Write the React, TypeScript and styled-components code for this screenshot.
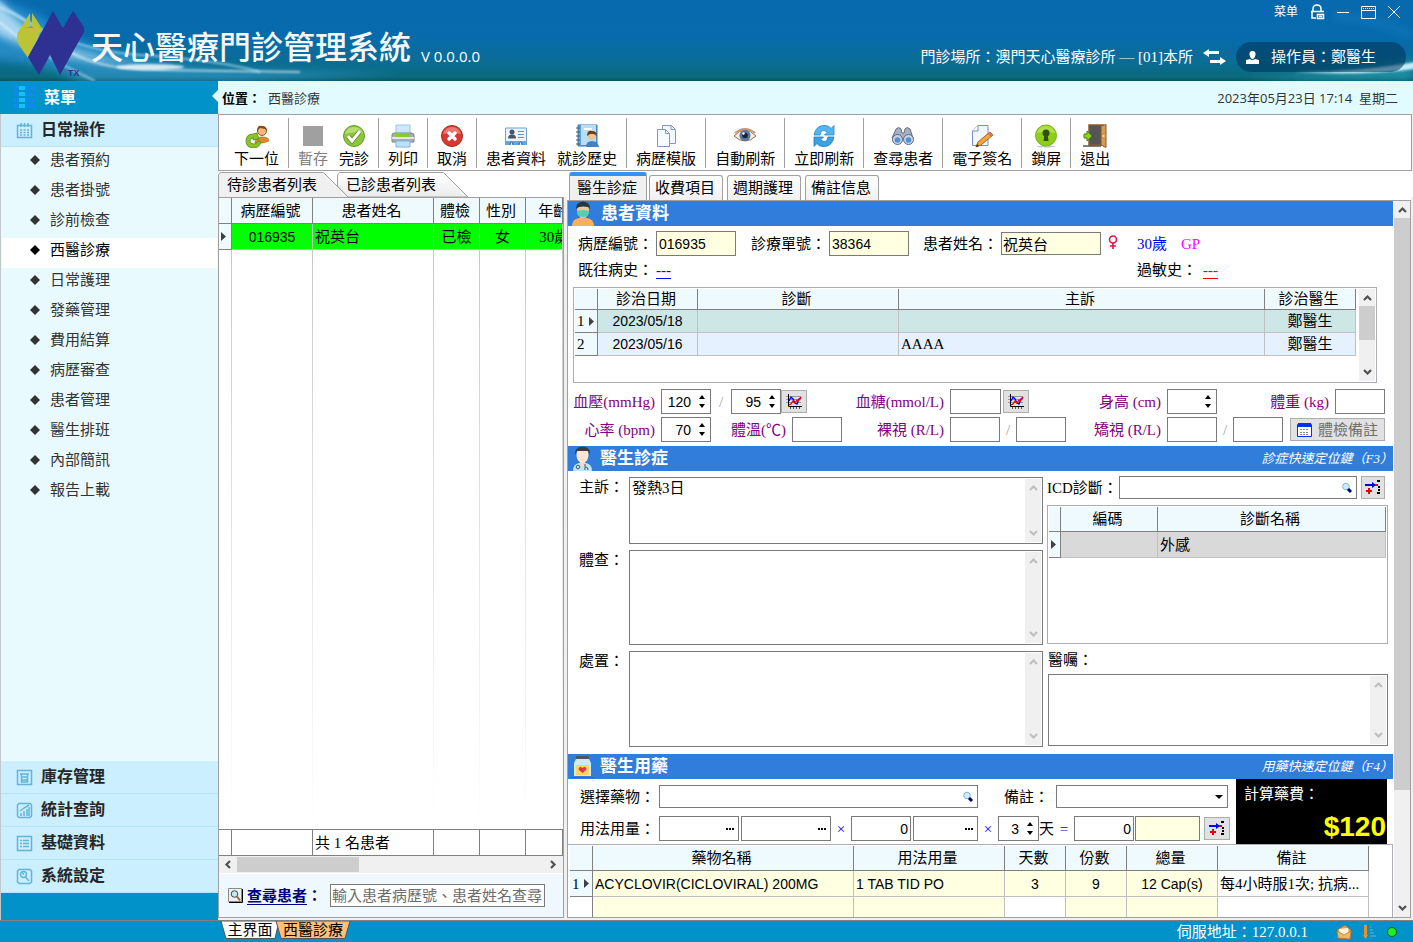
import React from 'react';
import styled, { createGlobalStyle, css } from 'styled-components';

const SERIF = '"Liberation Serif", "Noto Sans CJK TC", serif';
const SANS = '"Liberation Sans", "Noto Sans CJK TC", sans-serif';
const UI = '"Open Sans", "Noto Sans CJK TC", sans-serif';

const Global = createGlobalStyle`
  *, *::before, *::after { box-sizing: border-box; }
  body { margin: 0; background: #f0f0f0; font: 15px/20px ${SERIF}; color: #000; }
  button, input, select, textarea { font: inherit; color: inherit; margin: 0; padding: 0; border: 0; border-radius: 0; background: none; }
  input:focus, textarea:focus, select:focus { outline: 0; }
  ul { list-style: none; margin: 0; padding: 0; }
  svg { display: block; flex: none; }
`;

const Shell = styled.div`
  height: 100vh;
  min-width: 1320px;
  display: flex;
  flex-direction: column;
  overflow: hidden;
  white-space: nowrap;
`;

/* ---------- title bar ---------- */
const Header = styled.header`
  position: relative;
  flex: none;
  height: 81px;
  display: flex;
  justify-content: space-between;
  color: #fff;
  background: linear-gradient(#0769ae 0, #066bad 45%, #0a6d96 75%, #0b6a7c 95%, #075566 100%);
`;
const Swoosh = styled.svg<{ $side: 'left' | 'right' }>`
  position: absolute;
  top: 0;
  ${p => p.$side}: 0;
`;
const Brand = styled.div`
  position: relative;
  display: flex;
  align-items: center;
`;
const Title = styled.h1`
  margin: 12px 10px 0 7px;
  color: #f4f6f8;
  font: 500 32px/40px ${UI};
`;
const Version = styled.span`
  margin-top: 30px;
  font: 15px/20px ${UI};
`;
const HeaderSide = styled.div`
  position: relative;
  display: flex;
  flex-direction: column;
  align-items: flex-end;
`;
const WindowBar = styled.div`
  display: flex;
  align-items: center;
  height: 24px;
  padding-right: 13px;
  gap: 12px;
  font: 12px/16px ${UI};
`;
const PlainButton = styled.button`
  display: flex;
  align-items: center;
  cursor: pointer;
`;
const AccountBar = styled.div`
  display: flex;
  align-items: center;
  gap: 10px;
  margin-top: 18px;
  padding-right: 7px;
`;
const Operator = styled.div`
  display: flex;
  align-items: center;
  gap: 12px;
  width: 170px;
  height: 30px;
  padding-left: 10px;
  border-radius: 15px;
  background: rgba(0, 50, 90, 0.55);
`;

/* ---------- page frame ---------- */
const Body = styled.div`
  flex: 1;
  min-height: 0;
  display: flex;
  border-bottom: 1px solid #808080;
`;
const Sidebar = styled.nav`
  flex: none;
  width: 218px;
  display: flex;
  flex-direction: column;
  background: #e9faff;
  border-left: 1px solid #c0c8cc;
`;
const MenuTitle = styled.div`
  position: relative;
  display: flex;
  align-items: center;
  gap: 8px;
  height: 33px;
  padding-left: 13px;
  margin-left: -1px;
  color: #fff;
  background: #0292ca;
  font-size: 16px;
  font-weight: bold;
  &::after {
    content: '';
    position: absolute;
    right: 0;
    top: 9px;
    border: 6px solid transparent;
    border-left-width: 0;
    border-right-color: #e1fbff;
  }
`;
const Group = styled.button`
  display: flex;
  align-items: center;
  gap: 7px;
  flex: none;
  height: 33px;
  padding-left: 15px;
  color: #262626;
  background: #cbefff;
  border-bottom: 1px solid #b3e5fb;
  font-size: 16px;
  font-weight: bold;
`;
const Items = styled.ul`
  flex: 1;
  padding-top: 1px;
`;
const Item = styled.li<{ $on?: boolean }>`
  display: flex;
  align-items: center;
  gap: 10px;
  height: 30px;
  padding: 0 0 6px 28px;
  margin: 0 1px;
  color: ${p => (p.$on ? '#000' : '#333')};
  background: ${p => (p.$on ? '#fff' : 'none')};
  a { color: inherit; text-decoration: none; }
`;
const SidebarFoot = styled.div`
  height: 27px;
  background: #0292ca;
`;
const Main = styled.main`
  flex: 1;
  min-width: 0;
  display: flex;
  flex-direction: column;
`;
const Crumb = styled.div`
  flex: none;
  display: flex;
  align-items: center;
  height: 33px;
  padding: 0 15px 0 4px;
  gap: 7px;
  background: #e1fbff;
  color: #333;
  font: 13px/20px ${UI};
  b { color: #000; }
  time { margin-left: auto; white-space: pre; }
`;

/* ---------- tool bar ---------- */
const Toolbar = styled.div`
  flex: none;
  display: flex;
  gap: 1px;
  height: 57px;
  margin-right: 1px;
  padding: 3px 10px 2px;
  background: #fff;
  border: 1px solid #a0a0a0;
`;
const Tool = styled.button`
  display: flex;
  flex-direction: column;
  align-items: center;
  padding: 6px 5px 0;
  gap: 1px;
  &:disabled { color: #808080; }
`;
const Divider = styled.span`
  width: 1px;
  margin: 0 3px;
  background: #a0a0a0;
`;

/* ---------- tabs and panels ---------- */
const Columns = styled.div`
  flex: 1;
  min-height: 0;
  display: flex;
  gap: 3px;
  padding: 0 2px 2px 0;
  background: linear-gradient(#fff 0, #fff 26px, #f0f0f0 26px);
`;
const ListPane = styled.section`
  flex: none;
  width: 346px;
  display: flex;
  flex-direction: column;
`;
const ListTabs = styled.div`
  display: flex;
  height: 26px;
  padding-top: 1px;
  background: #fff;
`;
const ListTab = styled.button<{ $on?: boolean }>`
  position: relative;
  height: 25px;
  width: ${p => (p.$on ? 119 : 132)}px;
  padding-left: 9px;
  text-align: left;
  svg { position: absolute; left: 0; top: 0; }
  span { position: relative; }
`;
const Framed = styled.div`
  flex: 1;
  min-height: 0;
  display: flex;
  flex-direction: column;
  background: #fff;
  border: 1px solid #a0a0a0;
`;
const GridHolder = styled.div`
  flex: 1;
  min-width: 0;
  min-height: 0;
  overflow: hidden;
`;
const Table = styled.table<{ $fill?: boolean }>`
  width: 100%;
  height: ${p => (p.$fill ? '100%' : 'auto')};
  table-layout: fixed;
  border-collapse: separate;
  border-spacing: 0;
`;
const cell = css`
  overflow: hidden;
  padding: 0 2px;
  line-height: 20px;
`;
const Th = styled.th<{ $h: number }>`
  ${cell}
  height: ${p => p.$h}px;
  padding: 0 4px 0 1px;
  font-weight: normal;
  text-align: center;
  background: #effaff;
  border-right: 1px solid #808080;
  border-bottom: 1px solid #808080;
`;
const Mark = styled.th<{ $h: number }>`
  height: ${p => p.$h}px;
  padding: 0 2px;
  font-weight: normal;
  text-align: left;
  background: #effaff;
  border-right: 1px solid #808080;
  border-bottom: 1px solid #808080;
  div { display: flex; align-items: center; justify-content: space-between; }
`;
const Blank = styled.td`
  height: 26px;
  border-right: 1px solid #808080;
`;
const Td = styled.td<{ $bg?: string; $mid?: boolean; $sans?: boolean }>`
  ${cell}
  ${p => p.$bg && `background: ${p.$bg};`}
  ${p => p.$mid && 'text-align: center;'}
  ${p => p.$sans && `font: 14px/20px ${SANS};`}
  border-right: 1px solid #c0c0c0;
  border-bottom: 1px solid #c0c0c0;
`;
const Filler = styled.td`
  background: linear-gradient(#c8c8c8, #fff) right / 1px 100% no-repeat;
`;
const Foot = styled.td`
  height: 27px;
  padding: 0 2px;
  background: #fff;
  border: solid #808080;
  border-width: 1px 1px 1px 0;
`;

/* ---------- scroll bars ---------- */
const ScrollV = styled.div`
  flex: none;
  width: 16px;
  display: flex;
  flex-direction: column;
  justify-content: space-between;
  align-items: center;
  padding: 5px 0;
  background: #f0f0f0;
`;
const ThumbV = styled.div<{ $size: number }>`
  width: 100%;
  flex: 0 1 ${p => p.$size}%;
  margin: 4px 0 auto;
  background: #cdcdcd;
`;
const ScrollH = styled.div`
  display: flex;
  align-items: center;
  gap: 5px;
  height: 18px;
  padding: 0 6px 0 5px;
  background: #f0f0f0;
  border-bottom: 1px solid #fff;
  svg:last-child { margin-left: auto; }
`;
const ThumbH = styled.div`
  width: 122px;
  height: 15px;
  background: #cdcdcd;
`;
const SearchRow = styled.label`
  display: flex;
  align-items: center;
  height: 43px;
  padding: 0 18px 0 9px;
  gap: 4px;
  color: #000080;
  background: #eff7ff;
  b u { text-underline-offset: 3px; }
`;
const Box = styled.input<{ $w?: number; $h?: number; $right?: boolean; $yellow?: boolean; $after?: number }>`
  ${p => (p.$w ? `flex: none; width: ${p.$w}px;` : 'flex: 1; min-width: 0;')}
  height: ${p => p.$h ?? 25}px;
  margin-right: ${p => p.$after ?? 0}px;
  padding: 0 2px;
  color: #000;
  text-align: ${p => (p.$right ? 'right' : 'left')};
  border: 1px solid #7a7a7a;
  background: ${p => (p.$yellow ? '#ffffe1' : '#fff')};
  font-family: ${SANS};
  font-size: 14px;
  &::placeholder { color: #6d6d6d; opacity: 1; }
`;
const SearchBox = styled(Box)`
  margin-left: 4px;
  padding: 0 1px;
  font-size: 15px;
`;
const NameBox = styled(Box)`
  align-self: flex-start;
  padding: 0 1px;
  font-size: 15px;
`;

const FormPane = styled.section`
  flex: 1;
  min-width: 0;
  display: flex;
  flex-direction: column;
`;
const FormTabs = styled.div`
  display: flex;
  align-items: flex-end;
  gap: 4px;
  height: 29px;
  padding-left: 2px;
  background: #fff;
`;
const FormTab = styled.button<{ $on?: boolean }>`
  height: ${p => (p.$on ? 28 : 25)}px;
  padding: 0 0 0 ${p => (p.$on ? 7 : 5)}px;
  width: ${p => (p.$on ? 78 : 74)}px;
  margin-right: ${p => (p.$on ? -2 : 0)}px;
  display: flex;
  align-items: center;
  border: 1px solid #a0a0a0;
  border-bottom: 0;
  border-radius: 3px 3px 0 0;
  background: ${p => (p.$on ? '#f0f0f0' : 'linear-gradient(#fff, #f0f0f0)')};
  ${p => p.$on && 'border-top: 4px solid #3393f5;'}
`;
const FormFrame = styled.div`
  flex: 1;
  min-height: 0;
  display: flex;
  justify-content: space-between;
  gap: 1px;
  background: #fff;
  border: 1px solid #a0a0a0;
`;
const Content = styled.div`
  flex: 1;
  min-width: 0;
  display: flex;
  flex-direction: column;
`;
const SectionBar = styled.h2`
  flex: none;
  display: flex;
  align-items: center;
  height: 25px;
  margin: 0;
  padding: 0 0 0 3px;
  gap: 6px;
  color: #fff;
  background: #307ddb;
  font-size: 17px;
  font-weight: bold;
  em { margin-left: auto; font-size: 13px; font-weight: normal; }
`;

/* ---------- patient section ---------- */
const Patient = styled.div`
  display: grid;
  grid-template-columns: 559px 1fr;
  padding: 5px 10px 0;
`;
const Line = styled.div<{ $h: number }>`
  display: flex;
  align-items: center;
  height: ${p => p.$h}px;
`;
const Field = styled.label<{ $gap?: number }>`
  display: flex;
  align-items: center;
  gap: 3px;
  margin-right: ${p => p.$gap ?? 0}px;
`;
const Age = styled.span`
  color: #0000f0;
  margin-right: 14px;
`;
const Dept = styled.span`
  color: #f0f;
`;
const Dash = styled.a<{ $tone: string; $gap?: number }>`
  color: ${p => p.$tone};
  margin-left: ${p => p.$gap ?? 0}px;
  text-underline-offset: 3px;
`;
const GridFrame = styled.div<{ $h: number }>`
  display: flex;
  height: ${p => p.$h}px;
  padding: 1px;
  background: #fff;
  border: 1px solid #abadb3;
`;
const Visits = styled(GridFrame)`
  gap: 3px;
  margin: 3px 16px 0 5px;
`;
const Vitals = styled.div`
  display: grid;
  grid-template-columns: 87px 191px 86px 139px 66px 1fr;
  grid-auto-rows: 25px;
  gap: 3px 6px;
  padding: 6px 8px 4px 0;
  color: #800080;
  align-items: center;
`;
const VLabel = styled.label`
  display: flex;
  justify-content: flex-end;
`;
const VGroup = styled.div`
  display: flex;
  align-items: center;
`;
const Slash = styled.span<{ $w?: number }>`
  width: ${p => p.$w ?? 16}px;
  text-align: center;
  color: #a0a0a0;
`;
const TailField = styled.label<{ $end?: number }>`
  display: flex;
  align-items: center;
  gap: 6px;
  margin-left: auto;
  margin-right: ${p => p.$end ?? 0}px;
`;
const Spin = styled.span<{ $w: number }>`
  flex: none;
  display: flex;
  align-items: center;
  width: ${p => p.$w}px;
  height: 25px;
  padding-right: 5px;
  color: #000;
  border: 1px solid #7a7a7a;
  background: #fff;
  input { flex: 1; min-width: 0; text-align: right; padding-right: 8px; font: 14px/20px ${SANS}; }
`;
const Arrows = styled.span`
  display: flex;
  flex-direction: column;
  gap: 5px;
  button { display: flex; }
`;
const IconButton = styled.button<{ $w?: number }>`
  flex: none;
  display: flex;
  align-items: center;
  justify-content: center;
  width: ${p => p.$w ?? 26}px;
  height: 23px;
  border: 1px solid #adadad;
  background: #e1e1e1;
`;
const NoteButton = styled(IconButton)`
  gap: 6px;
  margin-left: auto;
  color: #707070;
`;

/* ---------- consultation section ---------- */
const Consult = styled.div`
  flex: none;
  display: grid;
  grid-template-columns: 1fr 341px;
  gap: 4px;
  padding: 5px 5px 7px 0;
`;
const Notes = styled.div`
  display: flex;
  flex-direction: column;
  gap: 6px;
  padding-top: 1px;
`;
const NoteRow = styled.label`
  display: flex;
`;
const NoteName = styled.span`
  flex: none;
  width: 61px;
  padding-left: 11px;
`;
const Area = styled.span<{ $h: number }>`
  flex: 1;
  display: flex;
  min-height: ${p => p.$h}px;
  padding: 1px;
  border: 1px solid #7a7a7a;
  background: #fff;
  textarea { flex: 1; min-width: 0; resize: none; overflow: hidden; padding: 0 1px; line-height: 18px; }
`;
const Diagnosis = styled.div`
  display: flex;
  flex-direction: column;
`;
const IcdRow = styled.div`
  display: flex;
  align-items: center;
  gap: 4px;
  margin-bottom: 6px;
  padding-right: 3px;
`;
const IcdLabel = styled.label`
  width: 68px;
`;
const Lookup = styled.span`
  flex: 1;
  display: flex;
  align-items: center;
  height: 23px;
  padding-right: 3px;
  border: 1px solid #7a7a7a;
  background: #fff;
  input { flex: 1; min-width: 0; font: 14px/20px ${SANS}; }
`;
const Advice = styled.label`
  display: flex;
  flex-direction: column;
  padding: 6px 0 0 1px;
  gap: 4px;
`;

/* ---------- medication section ---------- */
const Medication = styled.div`
  flex: none;
  display: flex;
  gap: 6px;
  padding-right: 6px;
`;
const MedForm = styled.div`
  flex: 1;
  display: flex;
  flex-direction: column;
  gap: 8px;
  padding: 6px 0 3px 12px;
`;
const MedRow = styled.div`
  display: flex;
  align-items: center;
`;
const MedLabel = styled.label`
  flex: none;
  width: 79px;
`;
const Dose = styled.span<{ $w: number; $after?: number }>`
  flex: none;
  display: flex;
  align-items: center;
  width: ${p => p.$w}px;
  height: 25px;
  margin-right: ${p => p.$after ?? 0}px;
  padding-right: 3px;
  border: 1px solid #7a7a7a;
  background: #fff;
  input { flex: 1; min-width: 0; font: 14px/20px ${SANS}; }
`;
const Sign = styled.span`
  flex: 1;
  text-align: center;
  color: #0000e0;
`;
const RemarkLabel = styled.label`
  margin-left: 26px;
  width: 52px;
`;
const Drop = styled.span`
  position: relative;
  flex: none;
  width: 172px;
  height: 23px;
  margin-right: 2px;
  select { appearance: none; width: 100%; height: 100%; border: 1px solid #7a7a7a; background: #fff; }
  svg { position: absolute; right: 5px; top: 10px; pointer-events: none; }
`;
const Fee = styled.div`
  flex: none;
  width: 151px;
  display: flex;
  flex-direction: column;
  justify-content: space-between;
  padding: 5px 1px 2px 8px;
  color: #fff;
  background: #000;
  b { align-self: flex-end; color: #ff0; font: bold 28px/30px ${SANS}; }
`;
const MedGrid = styled.div`
  flex: 1;
  min-height: 0;
  overflow: hidden;
  padding: 1px 1px 1px 2px;
  border: solid #abadb3;
  border-width: 1px 1px 0 0;
  table { width: 799px; }
`;

/* ---------- status bar ---------- */
const Status = styled.footer`
  flex: none;
  display: flex;
  align-items: center;
  height: 21px;
  padding: 0 15px 0 220px;
  color: #fff;
  background: #0292ca;
`;
const PageTab = styled.button<{ $on?: boolean }>`
  position: relative;
  align-self: flex-start;
  width: ${p => (p.$on ? 76 : 60)}px;
  height: 18px;
  margin-right: -5px;
  color: #000;
  line-height: 18px;
  svg { position: absolute; left: 0; top: 0; }
  span { position: relative; }
`;
const Server = styled.span`
  margin: 0 28px 0 auto;
`;
const Tray = styled.div`
  display: flex;
  align-items: center;
  gap: 10px;
`;

/* ---------- small drawings ---------- */
const Chev = ({ dir, dim }: { dir: 'up' | 'down' | 'left' | 'right'; dim?: boolean }) => {
  const d = { up: 'M1 6L4.5 2.5L8 6', down: 'M1 2L4.5 5.500L8 2', left: 'M6 1L2.500 4.500L6 8', right: 'M2 1L5.500 4.500L2 8' }[dir];
  return <svg width={dir === 'up' || dir === 'down' ? 9 : 8} height={dir === 'up' || dir === 'down' ? 8 : 9}><path d={d} fill="none" stroke={dim ? '#bfbfbf' : '#505050'} strokeWidth="2.2" /></svg>;
};
const Pointer = () => <svg width="6" height="9"><path d="M0 0L5 4.500L0 9z" fill="#404040" /></svg>;
const Tri = ({ up }: { up?: boolean }) => <svg width="6" height="4"><path d={up ? 'M0 4L3 0L6 4z' : 'M0 0L3 4L6 0z'} /></svg>;
const Dots = () => <svg width="10" height="3"><path d="M1 1h2v2H1zM4 1h2v2H4zM7 1h2v2H7z" /></svg>;
const Lens = () => (
  <svg width="12" height="12"><circle cx="5" cy="4.500" r="3.300" fill="#c9f0fa" stroke="#7fb6d8" /><path d="M7 7l3 3" stroke="#00007a" strokeWidth="3" /></svg>
);
const AddIcon = () => (
  <svg width="18" height="16"><path d="M1 4h7V2l4 3-4 3V6H1z" fill="#0000f0" /><path d="M4 8h2v2h2v2H6v2H4v-2H2v-2h2z" fill="#e00" /><path d="M11 4h3v2h-3z" fill="#e00" /><path d="M13 0h3v2h-3zM14 6h2v2h-2zM14 9h2v2h-2zM13 12h3v2h-3z" /></svg>
);
const ChartIcon = () => (
  <svg width="18" height="17"><path d="M1 3.500h15M1 6.500h15M1 9.500h15" stroke="#999" /><path d="M3.500 1v12.500H17" fill="none" stroke="#000" /><path d="M5.500 14v2M8.500 14v2M11.500 14v2M14.500 14v2" stroke="#555" /><path d="M4 8l2-4 2 2 2 4 2 1 2-5 2-1" fill="none" stroke="#00f" strokeWidth="1.300" /><path d="M4 12l2-1 2-3 2 2 2-3 1 1 3-4" fill="none" stroke="#f00000" strokeWidth="1.300" /></svg>
);
const NoteIcon = () => (
  <svg width="15" height="14"><path d="M.5 1.500h14v12H.5z" fill="#fff" stroke="#0030ff" /><path d="M1 0h13v4H1z" fill="#0030ff" /><path d="M3 6.500h9M3 9.500h9M3 11.500h9" stroke="#888" strokeDasharray="2 1" /></svg>
);

const Logo = () => (
  <svg width="84" height="81" viewBox="0 0 84 81">
    <path d="M30 13v14h-8.500zM32 13l9 14h-9z" fill="#bcc335" />
    <path d="M20.500 28H42L28 58L19 45Q14 36 20.500 28z" fill="#bcc335" />
    <path d="M28 57L53 11L63 28L73 11L84 27V32L60 75L50 55L39 75z" fill="#2e3192" />
    <text x="68" y="76" fontSize="9" fontWeight="bold" fontFamily="Liberation Sans" fill="#2e3192">TX</text>
  </svg>
);

type ToolName = 'next' | 'save' | 'done' | 'print' | 'cancel' | 'card' | 'history' | 'copy' | 'eye' | 'sync' | 'find' | 'sign' | 'lock' | 'exit';
const toolArt: Record<ToolName, React.ReactNode> = {
  next: (<><path d="M10 19q0-6 6-6l2 0q6 0 6 4l-6 2z" fill="#e08a2e" stroke="#b8641c" strokeWidth=".6" /><circle cx="17" cy="7" r="4.500" fill="#f2b77c" stroke="#9c5a22" /><path d="M12 7q0-6 5-5 5 0 5 5l-2-2-5-1z" fill="#8a4a1c" /><path d="M12 9l2 6-6 1 1-2q-4 0-4 3t4 3q3 0 4-3l3 1q-2 6-7 6-8 0-8-7t7-7z" fill="#8bc32b" stroke="#4f8c16" strokeWidth=".8" /></>),
  save: <path d="M2 2h20v20H2z" fill="#a0a0a0" />,
  done: (<><circle cx="12" cy="12" r="10.500" fill="#8cc63a" stroke="#68a022" /><path d="M3 10q2-7 9-7t9 7q-9-3-18 0z" fill="#b5dd75" /><path d="M6 12l4 5 8-10" fill="none" stroke="#5a8a20" strokeWidth="4.500" /><path d="M6 12l4 5 8-10" fill="none" stroke="#fff" strokeWidth="3" /></>),
  print: (<><path d="M5 1h14v10H5z" fill="#cde8fb" stroke="#9bc4e4" /><path d="M1 11q0-2 3-2h16q3 0 3 2v7H1z" fill="#a7adb4" stroke="#7d848b" /><path d="M5 9h14v4H5z" fill="#8acb2c" /><path d="M1 13h22v2H1z" fill="#e3e6e8" /><path d="M5 17h14v6H5z" fill="#bfe0fb" stroke="#83b4dd" /></>),
  cancel: (<><circle cx="12" cy="12" r="10.500" fill="#d83a31" stroke="#a8261e" /><path d="M3 10q2-7 9-7t9 7q-9-2-18 0z" fill="#e9796f" /><path d="M9 9l6 6M15 9l-6 6" stroke="#fff" strokeWidth="3.500" strokeLinecap="round" /></>),
  card: (<><path d="M1.500 4h21v16h-21z" fill="#eaf5ff" stroke="#6fa0d0" /><path d="M1 17h22v4H1z" fill="#62a8e0" /><circle cx="8" cy="8" r="2.500" fill="#44566e" /><path d="M4 14.500q0-4 4-4t4 4z" fill="#44566e" /><path d="M14 7.500h6M14 10.500h6M14 13.500h6" stroke="#6d90bb" /><path d="M6 21q0-3 1.500-3T9 21M15 21q0-3 1.500-3t1.500 3" fill="#eef" stroke="#245a94" /></>),
  history: (<><path d="M3 1h19v21H3z" fill="#5da6dc" stroke="#3777ad" /><path d="M6 1h15v20H6z" fill="#b9ddf6" /><path d="M1 4h4M1 8h4M1 12h4M1 16h4M1 20h4" stroke="#555" /><path d="M9 4h8v2H9z" fill="#fff" /><circle cx="17" cy="12" r="4" fill="#f0c18b" /><path d="M12 12q0-6 5-5 5 0 5 5l-3-2h-4z" fill="#6f3f18" /><path d="M11 23q0-6 6-6t7 6z" fill="#3c84c6" /></>),
  copy: (<><path d="M8.500 1.500h9l4 4v14h-13z" fill="#f3f7ff" stroke="#8595bd" /><path d="M17 1.500v4h4" fill="none" stroke="#8595bd" /><path d="M3.500 5.500h8l4 4v13h-12z" fill="#f7faff" stroke="#8595bd" /><path d="M11.500 5.500v4h4" fill="none" stroke="#8595bd" /></>),
  eye: (<><path d="M1 12Q12 0 23 12Q12 22 1 12z" fill="#f4f0ec" stroke="#9a6b4c" /><path d="M2 9Q12 1 22 9" fill="none" stroke="#c99576" strokeWidth="2" /><circle cx="12" cy="11.500" r="5.500" fill="#5878a0" /><circle cx="12" cy="11.500" r="2.800" fill="#17233c" /><circle cx="10.500" cy="9.500" r="1.200" fill="#fff" /></>),
  sync: (<><path d="M2 11Q4 1 13 1.500q4 0 6 3l3-3v9.500h-9.500l3-3Q9 4 8 11z" fill="#55b6ef" stroke="#2685c9" strokeWidth=".8" /><path d="M22 13q-2 10-11 9.500-4 0-6-3l-3 3V13h9.500l-3 3q6.500 4 7.500-3z" fill="#3ba2e6" stroke="#2078ba" strokeWidth=".8" /></>),
  find: (<><path d="M5 5q3-3 5 0l1 4h2l1-4q2-3 5 0l3 9-5 5-5-4h-2l-4 4-5-5z" fill="#a7b1c2" stroke="#616d82" /><circle cx="6.500" cy="15.500" r="5" fill="#cad4e0" stroke="#5b6880" /><circle cx="17.500" cy="15.500" r="5" fill="#cad4e0" stroke="#5b6880" /><circle cx="6.500" cy="16" r="2.800" fill="#4d91d8" /><circle cx="17.500" cy="16" r="2.800" fill="#4d91d8" /></>),
  sign: (<><path d="M8 1.500h10v20H2.500V7z" fill="#f0f5ff" stroke="#7590c4" /><path d="M8 1.500V7H2.500" fill="#fff" stroke="#7590c4" /><path d="M20 8l3 3L11 21l-5 2 2-5z" fill="#f2a63c" stroke="#a8621c" /><path d="M6 23l1-3 2 2z" fill="#333" /><path d="M20 8l3 3-2 2-3-3z" fill="#e56f5e" /></>),
  lock: (<><ellipse cx="12" cy="22.500" rx="9" ry="1" fill="#c8c8c8" /><circle cx="12" cy="11.500" r="10.500" fill="#8fcd1c" stroke="#7ab315" /><path d="M3 9q2-7 9-7t9 7q-9-2-18 0z" fill="#aee04b" /><circle cx="12" cy="9" r="3.500" fill="#2f4f0a" /><path d="M10.500 10h3l1 7h-5z" fill="#2f4f0a" /></>),
  exit: (<><path d="M6 1h14v20H6z" fill="#555" stroke="#8b5a2b" strokeWidth="1.500" /><path d="M18 2l5-1.500v23L18 21z" fill="#d39a52" stroke="#8b5a2b" /><circle cx="20.500" cy="12" r="1" fill="#fff0a0" /><path d="M0 22h18" stroke="#555" strokeWidth="1.500" /><path d="M1 10h3V7l5 5-5 5v-3H1z" fill="#8fd01c" stroke="#47860b" /></>),
};

const tools: ([ToolName, string] | null)[] = [
  ['next', '下一位'], null, ['save', '暫存'], ['done', '完診'], null, ['print', '列印'], null, ['cancel', '取消'], null,
  ['card', '患者資料'], ['history', '就診歷史'], null, ['copy', '病歷模版'], null, ['eye', '自動刷新'], null,
  ['sync', '立即刷新'], null, ['find', '查尋患者'], null, ['sign', '電子簽名'], null, ['lock', '鎖屏'], null, ['exit', '退出'],
];
const menu = ['患者預約', '患者掛號', '診前檢查', '西醫診療', '日常護理', '發藥管理', '費用結算', '病歷審查', '患者管理', '醫生排班', '內部簡訊', '報告上載'];

const groupArt: Record<string, React.ReactNode> = {
  day: <path d="M1.500 3.500h14v12h-14zM5 1v4M8.500 1v4M12 1v4M4 8h2M7.500 8h2M11 8h2M4 10.500h2M7.500 10.500h2M11 10.500h2M4 13h2M7.500 13h2M11 13h2" />,
  stock: <path d="M1.500 1.500h14v14h-14zM4 5h9M5.500 5v8h6V5M5.500 8h6M5.500 11h6" />,
  stats: <path d="M3 1.500h11l1.500 1.500v11L14 15.500H3L1.500 14V3zM5 14v-3M8 14V9M11 14V7M13 14V5M4 9l4-3 5-3" />,
  data: <path d="M1.500 1.500h14v14h-14zM4 5.500h2M7 5.500h6M4 8.500h2M7 8.500h6M4 11.500h2M7 11.500h6" />,
  setup: (<><path d="M3 1.500h11l1.500 1.500v11L14 15.500H3L1.500 14V3z" /><path d="M9.500 9l3.500 4" /><circle cx="7.500" cy="6.500" r="3" /><path d="M6 4.500l2 2" /></>),
};
const GroupIcon = ({ k }: { k: string }) => (
  <svg width="18" height="17" fill="none" stroke="#63b4d8" strokeWidth="1.500">{groupArt[k]}</svg>
);

const Scroll = ({ dim = true, thumb }: { dim?: boolean; thumb?: number }) => (
  <ScrollV><Chev dir="up" dim={dim} />{thumb && <ThumbV $size={thumb} />}<Chev dir="down" dim={dim} /></ScrollV>
);
const Spinner = ({ id, w = 50, value = '', label }: { id?: string; w?: number; value?: string; label?: string }) => (
  <Spin $w={w}>
    <input id={id} aria-label={label} defaultValue={value} />
    <Arrows><button aria-label="加"><Tri up /></button><button aria-label="減"><Tri /></button></Arrows>
  </Spin>
);
const NoteField = ({ name, h, value }: { name: string; h: number; value?: string }) => (
  <NoteRow><NoteName>{name}：</NoteName><Area $h={h}><textarea rows={2} defaultValue={value} /><Scroll /></Area></NoteRow>
);

export default function App() {
  return (
    <Shell lang="zh-Hant">
      <Global />
      <Header>
        <Swoosh $side="left" width="420" height="81">
          <defs>
            <filter id="soft" x="-20%" y="-50%" width="140%" height="200%"><feGaussianBlur stdDeviation="4" /></filter>
            <filter id="fine" x="-20%" y="-50%" width="140%" height="200%"><feGaussianBlur stdDeviation="1" /></filter>
          </defs>
          <path d="M-10-5L40 15Q90 60 240 70L400 74L230 82H80Q40 60-10 60z" fill="#3ba3e0" opacity=".55" filter="url(#soft)" />
          <path d="M-5-5Q20 30 60 45T150 66Q80 62 40 50T-10 30z" fill="#d5f1ff" opacity=".75" filter="url(#soft)" />
          <path d="M-5 5Q30 20 60 45T160 70L300 72" fill="none" stroke="#fff" opacity=".6" strokeWidth="2" filter="url(#fine)" />
          <path d="M-5 18Q30 50 95 81" fill="none" stroke="#fff" opacity=".45" strokeWidth="2" filter="url(#fine)" />
          <path d="M-5 0Q60 50 140 55T260 72" fill="none" stroke="#a8e2ff" opacity=".7" strokeWidth="2" filter="url(#fine)" />
          <ellipse cx="150" cy="67" rx="34" ry="3" fill="#fff" opacity=".8" filter="url(#fine)" />
        </Swoosh>
        <Swoosh $side="right" width="180" height="81">
          <path d="M10 78Q100 74 180 60V81H70z" fill="#29a3b8" opacity=".6" filter="url(#soft)" />
          <path d="M60 72Q130 72 182 62V69Q130 76 60 72z" fill="#d8f8ff" opacity=".9" filter="url(#fine)" />
          <path d="M100 16Q150 20 180 36" fill="none" stroke="#2f9ad2" opacity=".5" strokeWidth="3" filter="url(#soft)" />
        </Swoosh>
        <Brand><Logo /><Title>天心醫療門診管理系統</Title><Version>V 0.0.0.0</Version></Brand>
        <HeaderSide>
          <WindowBar>
            <PlainButton>菜单</PlainButton>
            <PlainButton aria-label="鎖定"><svg width="15" height="16" fill="none" stroke="#fff" strokeWidth="1.500"><path d="M3 7V5q0-4 4-4t4 4v2M1 7.500h13M2 8v6h4M7.500 10.500h6v4h-6zM9 12.500h3" /></svg></PlainButton>
            <PlainButton aria-label="最小化"><svg width="12" height="12"><path d="M0 6.500h12" stroke="#fff" /></svg></PlainButton>
            <PlainButton aria-label="視窗"><svg width="15" height="13" fill="none" stroke="#fff"><path d="M.5.5h14v12H.5zM0 4.500h15" /><path d="M2 2.500h11" strokeDasharray="1 1" /></svg></PlainButton>
            <PlainButton aria-label="關閉"><svg width="12" height="12"><path d="M0 0l12 12M12 0L0 12" stroke="#fff" /></svg></PlainButton>
          </WindowBar>
          <AccountBar>
            <span>門診場所：澳門天心醫療診所 — [01]本所</span>
            <PlainButton aria-label="切換診所"><svg width="23" height="16" fill="#fff"><path d="M0 4l6-4v2h10v3H6v3zM23 12l-6 4v-2H7v-3h10V8z" /></svg></PlainButton>
            <Operator><svg width="13" height="13" fill="#fff"><path d="M6.500 0q3.500 0 3 4-1 4-3 4t-3-4Q3 0 6.500 0zM0 13V9l4-1q2 2 5 0l4 1v4z" /></svg>操作員：鄭醫生</Operator>
          </AccountBar>
        </HeaderSide>
      </Header>

      <Body>
        <Sidebar>
          <MenuTitle>
            <svg width="23" height="23"><path d="M1 0h22v4H1zM1 6h22v4H1zM1 12h22v4H1zM1 18h22v4H1z" fill="#0d8be8" /><path d="M6 0h6v4H6zM6 6h6v4H6zM6 12h6v4H6zM6 18h6v4H6z" fill="#15c0f5" /></svg>
            菜單
          </MenuTitle>
          <Group><GroupIcon k="day" />日常操作</Group>
          <Items>
            {menu.map(m => (
              <Item key={m} $on={m === '西醫診療'}>
                <svg width="10" height="10"><path d="M5 0L10 5L5 10L0 5z" fill="currentColor" /></svg>
                <a href="#menu">{m}</a>
              </Item>
            ))}
          </Items>
          <Group><GroupIcon k="stock" />庫存管理</Group>
          <Group><GroupIcon k="stats" />統計查詢</Group>
          <Group><GroupIcon k="data" />基礎資料</Group>
          <Group><GroupIcon k="setup" />系統設定</Group>
          <SidebarFoot />
        </Sidebar>

        <Main>
          <Crumb><b>位置：</b><span>西醫診療</span><time>{'2023年05月23日 17:14  星期二'}</time></Crumb>
          <Toolbar>
            {tools.map((t, i) => t
              ? <Tool key={i} disabled={t[0] === 'save'}><svg width="24" height="24" viewBox="0 0 24 24">{toolArt[t[0]]}</svg>{t[1]}</Tool>
              : <Divider key={i} />)}
          </Toolbar>
          <Columns>
            <ListPane>
              <ListTabs>
                <ListTab $on>
                  <svg width="132" height="25"><path d="M.5 25V3l2-2.500h103L130 25" fill="#f0f0f0" stroke="#a0a0a0" /></svg>
                  <span>待診患者列表</span>
                </ListTab>
                <ListTab>
                  <svg width="132" height="25"><defs><linearGradient id="tab" x2="0" y2="1"><stop stopColor="#fff" /><stop offset="1" stopColor="#ececec" /></linearGradient></defs><path d="M.5 14V3l2-2.500h104L131 25H11z" fill="url(#tab)" stroke="#a0a0a0" /></svg>
                  <span>已診患者列表</span>
                </ListTab>
              </ListTabs>
              <Framed>
                <GridHolder>
                  <Table $fill>
                    <colgroup><col width="13" /><col width="81" /><col width="121" /><col width="46" /><col width="46" /><col /></colgroup>
                    <thead><tr><Mark $h={26} />{['病歷編號', '患者姓名', '體檢', '性別', '年齡'].map((t, i) => <Th $h={26} key={t}>{i === 4 ? '\u00a0\u00a0\u00a0年齡' : t}</Th>)}</tr></thead>
                    <tbody>
                      <tr>
                        <Mark $h={26}><div><Pointer /></div></Mark>
                        <Td $bg="#0f0" $mid $sans>016935</Td><Td $bg="#0f0">祝英台</Td><Td $bg="#0f0" $mid>已檢</Td><Td $bg="#0f0" $mid>女</Td><Td $bg="#0f0">&nbsp;&nbsp;&nbsp;30歲</Td>
                      </tr>
                      <tr>{[0, 1, 2, 3, 4, 5].map(i => <Filler key={i} />)}</tr>
                    </tbody>
                    <tfoot><tr><Foot /><Foot /><Foot>共 1 名患者</Foot><Foot /><Foot /><Foot /></tr></tfoot>
                  </Table>
                </GridHolder>
                <ScrollH><Chev dir="left" /><ThumbH /><Chev dir="right" /></ScrollH>
                <SearchRow>
                  <svg width="15" height="15"><path d="M.5.5h13v13H.5z" fill="#f0f0f0" stroke="#888" /><path d="M14.500 1v13.500H1" fill="none" stroke="#000" /><circle cx="6.500" cy="6" r="3.300" fill="#bfeaff" stroke="#444" /><path d="M9 8.500l3 4" stroke="#a0682c" strokeWidth="2" /></svg>
                  <b><u>查尋患者</u>：</b>
                  <SearchBox $h={23} placeholder="輸入患者病歷號、患者姓名查尋" />
                </SearchRow>
              </Framed>
            </ListPane>

            <FormPane>
              <FormTabs><FormTab $on>醫生診症</FormTab><FormTab>收費項目</FormTab><FormTab>週期護理</FormTab><FormTab>備註信息</FormTab></FormTabs>
              <FormFrame>
                <Content>
                  <SectionBar>
                    <svg width="24" height="25"><path d="M1 25q0-7 7-8h8q7 1 7 8z" fill="#fbae5c" /><path d="M9 14h6v6H9z" fill="#f5a97d" /><ellipse cx="12" cy="9" rx="6" ry="8" fill="#f9c3a0" /><path d="M5 8q0-7 7-7.500Q19 1 19 8l-2-2q-5-1-9 0z" fill="#2b3444" /><path d="M6 10l6-1 6 1q0 6-6 6t-6-6z" fill="#4fd3ae" /></svg>
                    患者資料
                  </SectionBar>
                  <Patient>
                    <Line $h={25}>
                      <Field $gap={15}>病歷編號：<Box $w={80} $yellow defaultValue="016935" /></Field>
                      <Field $gap={14}>診療單號：<Box $w={80} $yellow defaultValue="38364" /></Field>
                      <Field $gap={7}>患者姓名：<NameBox $w={100} $h={23} $yellow defaultValue="祝英台" /></Field>
                      <svg width="10" height="18" fill="none" stroke="#e8104a" strokeWidth="1.600"><circle cx="5" cy="4.500" r="3.500" /><path d="M5 8v6M2 11h6" /></svg>
                    </Line>
                    <Line $h={25}><Age>30歲</Age><Dept>GP</Dept></Line>
                    <Line $h={28}><Field as="div">既往病史：<Dash $tone="#0000f0" href="#history">---</Dash></Field></Line>
                    <Line $h={28}><Field as="div">過敏史：<Dash $tone="#f00000" $gap={3} href="#allergy">---</Dash></Field></Line>
                  </Patient>
                  <Visits $h={96}>
                    <GridHolder>
                      <Table>
                        <colgroup><col width="23" /><col width="100" /><col width="201" /><col /><col width="91" /></colgroup>
                        <thead><tr><Mark $h={21} />{['診治日期', '診斷', '主訴', '診治醫生'].map(t => <Th $h={21} key={t}>{t}</Th>)}</tr></thead>
                        <tbody>
                          <tr><Mark $h={23}><div>1<Pointer /></div></Mark><Td $bg="#cde7e7" $mid $sans>2023/05/18</Td><Td $bg="#cde7e7" /><Td $bg="#cde7e7" /><Td $bg="#cde7e7" $mid>鄭醫生</Td></tr>
                          <tr><Mark $h={23}>2</Mark><Td $bg="#e5f1ff" $mid $sans>2023/05/16</Td><Td $bg="#e5f1ff" /><Td $bg="#e5f1ff">AAAA</Td><Td $bg="#e5f1ff" $mid>鄭醫生</Td></tr>
                        </tbody>
                      </Table>
                    </GridHolder>
                    <Scroll dim={false} thumb={42} />
                  </Visits>
                  <Vitals>
                    <VLabel htmlFor="bp">血壓(mmHg)</VLabel>
                    <VGroup><Spinner id="bp" value="120" /><Slash $w={20}>/</Slash><Spinner value="95" label="舒張壓" /><IconButton aria-label="血壓圖表"><ChartIcon /></IconButton></VGroup>
                    <VLabel htmlFor="glu">血糖(mmol/L)</VLabel>
                    <VGroup><Box id="glu" $w={51} $after={2} /><IconButton aria-label="血糖圖表"><ChartIcon /></IconButton></VGroup>
                    <VLabel htmlFor="cm">身高 (cm)</VLabel>
                    <VGroup><Spinner id="cm" /><TailField>體重 (kg)<Box $w={50} /></TailField></VGroup>
                    <VLabel htmlFor="hr">心率 (bpm)</VLabel>
                    <VGroup><Spinner id="hr" value="70" /><TailField $end={10}>體溫(℃)<Box $w={50} /></TailField></VGroup>
                    <VLabel htmlFor="uv">裸視 (R/L)</VLabel>
                    <VGroup><Box id="uv" $w={50} /><Slash>/</Slash><Box $w={50} aria-label="裸視左" /></VGroup>
                    <VLabel htmlFor="cv">矯視 (R/L)</VLabel>
                    <VGroup><Box id="cv" $w={50} /><Slash>/</Slash><Box $w={50} aria-label="矯視左" /><NoteButton $w={95}><NoteIcon />體檢備註</NoteButton></VGroup>
                  </Vitals>

                  <SectionBar>
                    <svg width="23" height="25"><path d="M2 25q0-7 6-8h7q6 1 6 8z" fill="#bfe6f7" /><path d="M9 14h5v6H9z" fill="#fbd9c0" /><ellipse cx="11.500" cy="9" rx="6" ry="8" fill="#ffe6d3" /><path d="M4 9q-1-8 7.500-8.500Q20 1 19 9l-2-4q-6 0-11 0z" fill="#3c3c46" /><circle cx="7" cy="21" r="1.800" fill="none" stroke="#4a5664" /><path d="M14 18v3M14 24q-1-3 1-3t2 3" fill="none" stroke="#4a5664" /></svg>
                    醫生診症<em>診症快速定位鍵（F3）</em>
                  </SectionBar>
                  <Consult>
                    <Notes><NoteField name="主訴" h={67} value="發熱3日" /><NoteField name="體查" h={95} /><NoteField name="處置" h={96} /></Notes>
                    <Diagnosis>
                      <IcdRow>
                        <IcdLabel htmlFor="icd">ICD診斷：</IcdLabel>
                        <Lookup><input id="icd" /><Lens /></Lookup>
                        <IconButton $w={24} aria-label="新增診斷"><AddIcon /></IconButton>
                      </IcdRow>
                      <GridFrame $h={139}>
                        <GridHolder>
                          <Table>
                            <colgroup><col width="12" /><col width="97" /><col /></colgroup>
                            <thead><tr><Mark $h={25} /><Th $h={25}>編碼</Th><Th $h={25}>診斷名稱</Th></tr></thead>
                            <tbody><tr><Mark $h={26}><div><Pointer /></div></Mark><Td $bg="#d9d9d9" /><Td $bg="#d9d9d9">外感</Td></tr></tbody>
                          </Table>
                        </GridHolder>
                      </GridFrame>
                      <Advice><span>醫囑：</span><Area $h={72}><textarea rows={2} /><Scroll /></Area></Advice>
                    </Diagnosis>
                  </Consult>

                  <SectionBar>
                    <svg width="23" height="23"><path d="M5 1h13v3H5z" fill="#4b5663" /><path d="M5 4h13l2 4v13H3V8z" fill="#cfeaf7" /><path d="M5 10h13v10H5z" fill="#fcd65e" /><path d="M11.500 18l-4-3.500q0-3 2.500-2.500l1.500 1 1.500-1q2.500-.5 2.500 2.500z" fill="#e3344a" /><path d="M0 22.500h23" stroke="#b33a5a" /></svg>
                    醫生用藥<em>用藥快速定位鍵（F4）</em>
                  </SectionBar>
                  <Medication>
                    <MedForm>
                      <MedRow>
                        <MedLabel htmlFor="drug">選擇藥物：</MedLabel>
                        <Lookup><input id="drug" /><Lens /></Lookup>
                        <RemarkLabel htmlFor="remark">備註：</RemarkLabel>
                        <Drop><select id="remark" /><svg width="8" height="4"><path d="M0 0h8L4 4z" /></svg></Drop>
                      </MedRow>
                      <MedRow>
                        <MedLabel htmlFor="usage">用法用量：</MedLabel>
                        <Dose $w={80} $after={2}><input id="usage" /><Dots /></Dose>
                        <Dose $w={90}><input aria-label="頻率" /><Dots /></Dose>
                        <Sign>×</Sign>
                        <Box $w={60} $after={2} $right defaultValue="0" aria-label="劑量" />
                        <Dose $w={65}><input aria-label="單位" /><Dots /></Dose>
                        <Sign>×</Sign>
                        <Spinner w={41} value="3" label="天數" />天
                        <Sign>=</Sign>
                        <Box $w={60} $after={1} $right defaultValue="0" aria-label="總量" />
                        <Box $w={65} $after={4} $yellow aria-label="總量單位" />
                        <IconButton aria-label="新增藥物"><AddIcon /></IconButton>
                      </MedRow>
                    </MedForm>
                    <Fee>計算藥費：<b>$120</b></Fee>
                  </Medication>
                  <MedGrid>
                    <Table>
                      <colgroup><col width="23" /><col width="261" /><col width="151" /><col width="61" /><col width="61" /><col width="91" /><col width="151" /></colgroup>
                      <thead><tr><Mark $h={25} />{['藥物名稱', '用法用量', '天數', '份數', '總量', '備註'].map(t => <Th $h={25} key={t}>{t}</Th>)}</tr></thead>
                      <tbody>
                        <tr><Mark $h={26}><div>1<Pointer /></div></Mark><Td $bg="#ffffe1" $sans>ACYCLOVIR(CICLOVIRAL) 200MG</Td><Td $bg="#ffffe1" $sans>1 TAB TID PO</Td><Td $bg="#ffffe1" $mid $sans>3</Td><Td $bg="#ffffe1" $mid $sans>9</Td><Td $bg="#ffffe1" $mid $sans>12 Cap(s)</Td><Td>每4小時服1次; 抗病...</Td></tr>
                        <tr><Blank /><Td $bg="#ffffe1" /><Td $bg="#ffffe1" /><Td /><Td $bg="#ffffe1" /><Td $bg="#ffffe1" /><Td /></tr>
                      </tbody>
                    </Table>
                  </MedGrid>
                </Content>
                <Scroll dim={false} thumb={81} />
              </FormFrame>
            </FormPane>
          </Columns>
        </Main>
      </Body>

      <Status>
        <PageTab><svg width="60" height="18"><path d="M1 0L6 17.500H55L59 0z" fill="#fff" stroke="#555" /></svg><span>主界面</span></PageTab>
        <PageTab $on><svg width="76" height="18"><path d="M1 0L6 17.500H70L75 0z" fill="#ffbe7a" stroke="#555" /></svg><span>西醫診療</span></PageTab>
        <Server>伺服地址：127.0.0.1</Server>
        <Tray>
          <svg width="16" height="16"><path d="M1 6l8-5 6 5-1 9-12-1z" fill="#e0a04a" stroke="#a86a1e" strokeWidth=".8" /><path d="M3 5l9-1 1 7-9 1z" fill="#fff6e0" /><path d="M1 7l7 4 7-4-1 8-12-1z" fill="#efb862" stroke="#b87a2a" strokeWidth=".8" /></svg>
          <svg width="14" height="14"><path d="M2 0h3v10h1l-2.500 4L1 10h1z" fill="#e8902a" /><path d="M8 2h1M8 5h3M8 8h4M8 11h6" stroke="#5fb6e0" /></svg>
          <svg width="12" height="12"><circle cx="6" cy="6" r="4.500" fill="#1fef1f" stroke="#0a5a0a" /></svg>
        </Tray>
      </Status>
    </Shell>
  );
}
